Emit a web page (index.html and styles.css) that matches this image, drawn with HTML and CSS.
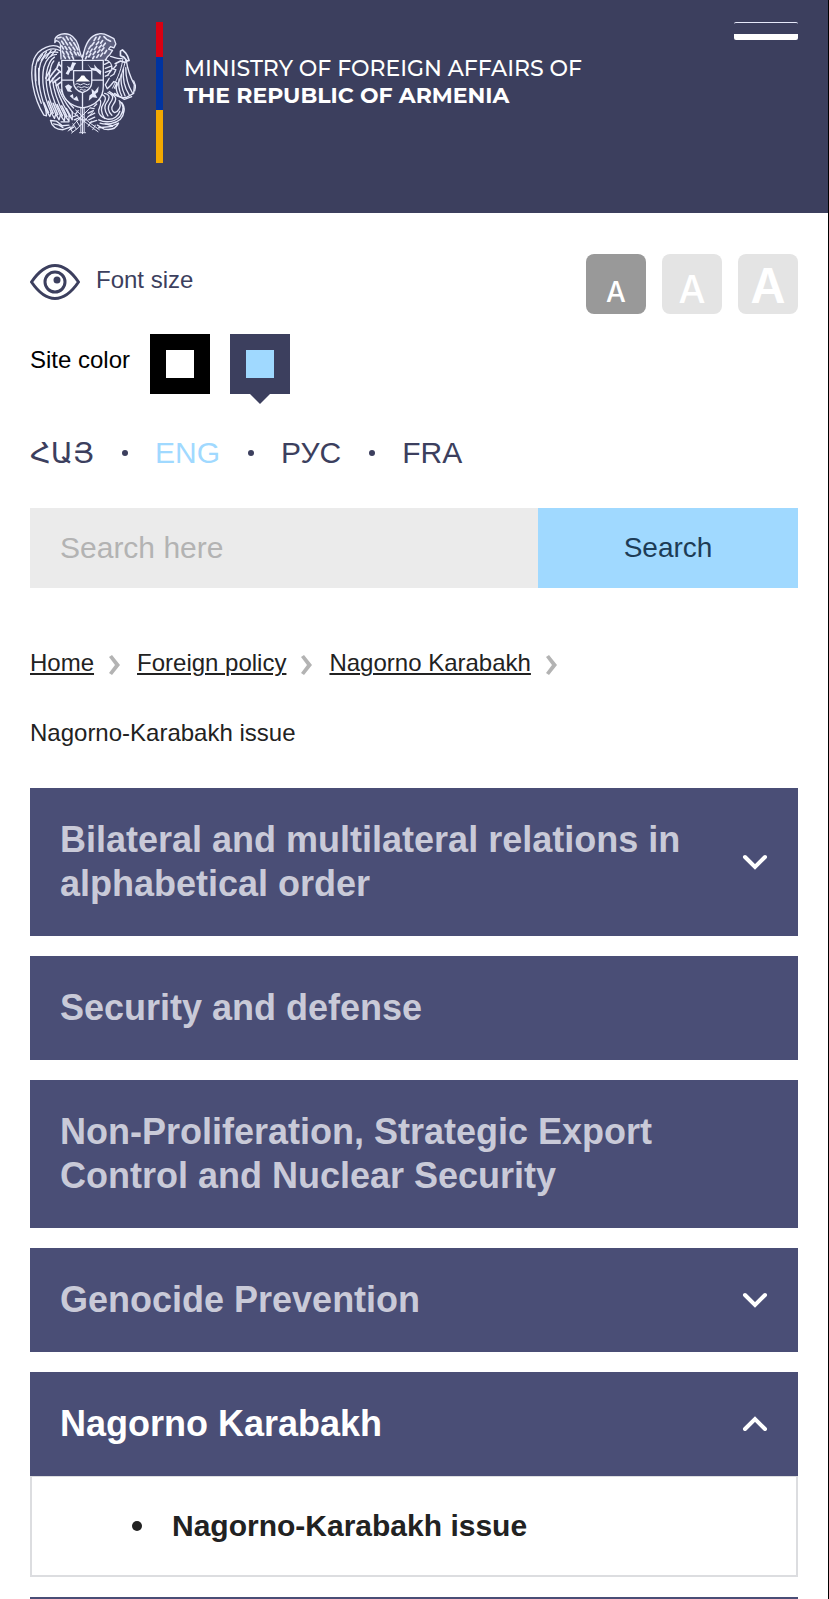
FILE: index.html
```
<!DOCTYPE html>
<html lang="en">
<head>
	<meta charset="UTF-8">
	<meta name="viewport" content="width=device-width, initial-scale=1">
	<title>Nagorno-Karabakh issue</title>
	<link rel="stylesheet" href="styles.css">
</head>
<body>
<header class="header">
	<a href="#" class="brand">
		<svg class="emblem" viewBox="28 36 321 312" fill="none" stroke="#e6e9fa" stroke-width="4" stroke-linecap="round" stroke-linejoin="round" aria-hidden="true">
			<!-- eagle -->
			<path d="M122 118L120 82C122 72 116 64 108 62L103 68L104 56C112 42 132 38 148 44C166 52 174 70 178 92L184 112" fill="#5d607f"/>
			<path d="M112 54L122 52M128 54l6 8M138 50l6 10M150 54l6 9M124 64l6 9M136 66l6 9M148 68l6 9M160 68l6 9M124 78l5 9M134 80l6 9M146 82l6 9M158 82l6 9M168 80l5 10M126 94l5 9M138 95l6 9M150 96l6 9M162 96l6 9M172 98l5 9M130 108l5 8M144 109l4 8M156 110l4 8" stroke-width="5"/>
			<!-- left wing -->
			<path d="M120 84C96 68 54 84 40 118C24 160 38 236 70 288L78 290L76 272"/>
			<path d="M118 92C94 80 64 92 50 122C38 158 44 206 62 252"/>
			<path d="M112 98C92 92 72 104 60 130C50 164 54 214 76 272L88 292L92 280"/>
			<path d="M108 104C90 104 78 118 70 142C62 180 68 226 92 280L102 298L106 284"/>
			<path d="M102 112C88 120 82 138 78 160C74 192 82 236 106 284L116 302L120 288"/>
			<path d="M100 124C90 134 88 152 86 170C86 200 96 240 120 288L132 306L134 290"/>
			<path d="M96 176C98 210 110 246 134 290L146 306L146 286M104 182C108 212 120 244 146 286L156 302L156 278"/>
			<path d="M112 196C116 216 130 244 156 278M122 210C130 232 142 248 160 266M66 104L52 124M78 96L62 122M92 92L76 116M106 90L92 108M44 140L46 184M54 146L56 196"/>
			<path d="M82 182L96 162L110 144L116 128M88 190L106 168L118 156M76 176L90 150M98 190L118 174M108 198L122 188M116 134l8 8M112 150l10 8" stroke-width="5"/>
			<path d="M70 250L84 280M84 246L98 282M98 252L112 286M110 256L126 290M124 260L140 292M138 268L150 290" stroke-width="5"/>
			<!-- lion -->
			<path d="M188 112C194 76 208 46 236 42C250 38 262 46 270 50L282 56L288 72L282 84L272 80L266 88L278 92L270 104L262 112L256 122" fill="#5d607f"/>
			<path d="M252 50l8 8M264 60l8 4M240 50l-5 9M228 52l-6 10M248 62l-6 8M236 66l-7 8M222 68l-7 9M212 78l-6 9M256 70l-7 9M244 76l-7 8M230 80l-7 9M216 88l-6 9M204 94l-5 9M252 84l-7 9M240 90l-7 8M226 95l-7 9M212 102l-6 9M248 100l-6 9M236 105l-6 8M200 110l-4 7M222 110l-4 7M260 92l-6 9" stroke-width="5"/>
			<path d="M256 120C270 124 278 136 276 150L262 168M254 134l12-6M256 146l16-6M256 158l16-6M256 170l10-4M272 110C284 112 296 120 306 116"/>
			<path d="M302 94L308 90L318 100L324 110L328 122L322 124L312 112L302 108ZM286 132L302 124L316 128" stroke-width="5"/>
			<path d="M268 176L256 196L262 208L272 198L282 186L292 190L284 206M276 146L288 150L282 164L272 170M290 136L280 148"/>
			<path d="M310 112C306 146 296 170 278 206M318 120C312 146 302 176 288 208" stroke-width="3"/>
			<!-- harp-like bow -->
			<path d="M320 124C324 154 334 176 344 196L342 222L320 234C300 238 282 226 268 216M318 144C318 172 326 200 338 220M311 148C308 178 314 204 328 226M305 164C300 188 306 208 316 230M298 178C294 198 298 214 306 230M290 192C288 206 290 218 296 228"/>
			<path d="M342 184L348 200L345 214M284 222L314 240L336 232"/>
			<!-- lion tail and ribbon -->
			<path d="M254 222C274 226 268 240 260 250C248 264 256 278 264 290M264 220C286 228 278 242 270 252C260 266 266 278 276 288M246 226C262 232 256 244 250 254C238 270 246 286 254 298"/>
			<path d="M238 240C248 246 240 262 236 272C234 284 244 296 262 300C282 302 296 290 300 276M274 224C294 232 288 246 280 256C272 266 276 276 284 280C298 276 304 262 300 250"/>
			<path d="M298 244C312 254 314 272 302 290C290 306 262 314 236 302M306 250C318 264 314 286 302 300C286 314 260 318 240 312"/>
			<path d="M232 318L252 330C274 334 290 326 296 312L278 320L256 314"/>
			<path d="M90 304L108 306L126 320L146 318M90 304C94 322 108 332 128 332L150 324M100 314L116 318L128 326M122 308L146 308M236 326L278 322"/>
			<!-- sword, wheat and broken chain -->
			<path d="M182 262V338M187 264V344M192 262V338M176 302H200M178 341H196" stroke-width="3"/>
			<path d="M166 272L210 312L238 332M208 268L166 310L144 336M158 280L220 328L234 338M218 278L174 326L154 342M148 324L156 338M158 314L168 330M168 304L178 320M226 318L218 332M214 306L204 322" stroke-width="3"/>
			<path d="M160 292l12-4M162 302l14-6M204 282l16-8M204 292l20-10M206 302l18-8M212 310l18-6M166 284l8-10M210 266l12 2M222 262l8-8M148 332l12-8"/>
			<!-- shield -->
			<path d="M124 122H250V200C250 234 228 258 187 266C146 258 124 234 124 200Z" fill="#3c3f5e"/>
			<path d="M187 106V153M187 218V266M124 182H160M215 182H250"/>
			<path d="M136 162L144 148L140 138L150 144L156 128L168 130L162 140L158 152L150 154L144 166ZM202 132L212 144L224 146L222 134L232 146L244 154L242 166L228 154L214 152ZM134 200L144 194L156 202L150 210L156 218L142 216ZM148 230L158 224L160 238L170 230L176 246L162 242ZM206 244L208 228L216 222L214 208L224 216L236 200L234 218L226 224L232 236L218 234Z" fill="#e6e9fa" stroke="none"/>
			<path d="M160 153H215V188C215 204 204 214 187 220C170 214 160 204 160 188Z" fill="#3c3f5e"/>
			<path d="M166 186L178 176L184 168H192L198 176L210 186Z" fill="#fff" stroke="none"/>
			<path d="M166 194q5-4 10 0t10 0t10 0t12 0M170 203q4-3 9 0t9 0t9 0t8 0M180 211q4-3 7 0t8 0" stroke-width="3"/>
		</svg>
		<span class="flag"></span>
		<span class="brand_name">MINISTRY OF FOREIGN AFFAIRS OF<br><b>THE REPUBLIC OF ARMENIA</b></span>
	</a>
	<button class="menu_btn" type="button" aria-label="Menu"></button>
</header>

<main class="content">
	<div class="font_size">
		<svg class="eye" viewBox="0 0 50 36" fill="none" stroke="#3c3f5e" stroke-width="3" aria-hidden="true">
			<path d="M1.5 18C9 7 16 1.5 25 1.5S41 7 48.5 18C41 29 34 34.5 25 34.5S9 29 1.5 18Z" stroke-linejoin="round"/>
			<circle cx="25" cy="18" r="10"/>
			<circle cx="27" cy="16" r="3.5" fill="#3c3f5e" stroke="none"/>
		</svg>
		<span class="caption" id="size_caption">Font size</span>
		<div class="sizes" role="group" aria-labelledby="size_caption">
			<button type="button" class="size size_small active">A</button>
			<button type="button" class="size size_medium">A</button>
			<button type="button" class="size size_big">A</button>
		</div>
	</div>

	<div class="site_color">
		<span class="caption" id="color_caption">Site color</span>
		<div class="swatches" role="group" aria-labelledby="color_caption">
			<button type="button" class="swatch" aria-label="Black and white"></button>
			<button type="button" class="swatch swatch_blue active" aria-label="Blue"></button>
		</div>
	</div>

	<ul class="langs">
		<li><a href="#" lang="hy" class="hy">ՀԱՅ</a></li>
		<li><a href="#" class="current">ENG</a></li>
		<li><a href="#" lang="ru">РУС</a></li>
		<li><a href="#" lang="fr">FRA</a></li>
	</ul>

	<form class="search" action="#">
		<input class="search_input" type="text" placeholder="Search here" aria-label="Search here">
		<button class="search_btn" type="submit">Search</button>
	</form>

	<nav class="crumbs">
		<a href="#">Home</a>
		<svg class="crumb_arrow" viewBox="0 0 13 20"><path d="M1 2L4 0L12 10L4 20L1 18L7 10Z"/></svg>
		<a href="#">Foreign policy</a>
		<svg class="crumb_arrow" viewBox="0 0 13 20"><path d="M1 2L4 0L12 10L4 20L1 18L7 10Z"/></svg>
		<a href="#">Nagorno Karabakh</a>
		<svg class="crumb_arrow" viewBox="0 0 13 20"><path d="M1 2L4 0L12 10L4 20L1 18L7 10Z"/></svg>
		<span class="crumb_last">Nagorno-Karabakh issue</span>
	</nav>

	<div class="side_menu">
		<a href="#" class="item">Bilateral and multilateral relations in alphabetical order
			<svg class="arrow" viewBox="0 0 26 16"><path d="M3 3L13 13L23 3"/></svg>
		</a>
		<a href="#" class="item">Security and defense</a>
		<a href="#" class="item">Non-Proliferation, Strategic Export Control and Nuclear Security</a>
		<a href="#" class="item">Genocide Prevention
			<svg class="arrow" viewBox="0 0 26 16"><path d="M3 3L13 13L23 3"/></svg>
		</a>
		<div class="opened">
			<a href="#" class="item active">Nagorno Karabakh
				<svg class="arrow" viewBox="0 0 26 16"><path d="M3 13L13 3L23 13"/></svg>
			</a>
			<ul class="submenu">
				<li><a href="#">Nagorno-Karabakh issue</a></li>
			</ul>
		</div>
		<a href="#" class="item" aria-label="Next section"></a>
	</div>
</main>
</body>
</html>
```
FILE: styles.css
```
*{
	box-sizing: border-box;
}
html{
	height: 100%;
}
body{
	height: 100%;
	margin: 0;
	overflow: hidden;
	border-right: 1px solid #000;
	background-color: #fff;
	font-family: "Liberation Sans", Arial, sans-serif;
	font-size: 24px;
	color: #222;
}
a{
	color: inherit;
	text-decoration: none;
}
button{
	border: 0;
	padding: 0;
	font-family: inherit;
	cursor: pointer;
}
ul{
	list-style: none;
	margin: 0;
	padding: 0;
}

/* header */
.header{
	display: flex;
	justify-content: space-between;
	align-items: flex-start;
	padding: 22px 30px 50px;
	background-color: #3c3f5e;
}
.brand{
	display: flex;
	align-items: flex-start;
	color: #fff;
}
.emblem{
	width: 106px;
	height: 103px;
	margin-top: 10px;
}
.flag{
	width: 7px;
	height: 141px;
	margin: 0 21px 0 20px;
	background: linear-gradient(#d90012 35px, #0033a0 35px, #0033a0 88px, #f2a800 88px);
}
.brand_name{
	padding-top: 33px;
	font-family: Montserrat, Inter, sans-serif;
	font-size: 22px;
	font-weight: 500;
	line-height: 27px;
}
.menu_btn{
	width: 64px;
	height: 18px;
	border-top: 1px solid #e6e9fa;
	border-bottom: 6px solid #fff;
	border-radius: 2px;
	background: none;
}

/* page settings */
.content{
	padding: 41px 30px 0;
}
.font_size,
.site_color{
	display: flex;
	align-items: center;
	margin-bottom: 20px;
}
.font_size{
	color: #3c3f5e;
}
.caption{
	padding-bottom: 8px;
}
.eye{
	width: 50px;
	height: 36px;
	margin: 0 16px 4px 0;
}
.sizes{
	display: flex;
	gap: 16px;
	margin-left: auto;
}
.size{
	display: flex;
	justify-content: center;
	align-items: flex-end;
	width: 60px;
	height: 60px;
	border-radius: 8px;
	background-color: #e4e4e4;
	color: #fff;
	font-family: Inter, sans-serif;
	font-weight: 500;
	line-height: 1;
}
.size.active{
	background-color: #999;
}
.size_small{
	padding-bottom: 8px;
	font-size: 28px;
}
.size_medium{
	padding-bottom: 6px;
	font-size: 38px;
}
.size_big{
	padding-bottom: 4px;
	font-size: 48px;
	font-weight: 600;
}
.site_color{
	gap: 20px;
	color: #000;
}
.swatches{
	display: flex;
	gap: 20px;
}
.swatch{
	position: relative;
	width: 60px;
	height: 60px;
	border: 16px solid #000;
	background-color: #fff;
}
.swatch_blue{
	border-color: #3c3f5e;
	background-color: #a0d9ff;
}
.swatch.active::after{
	content: "";
	position: absolute;
	top: 44px;
	left: 4px;
	border: 10px solid transparent;
	border-top-color: #3c3f5e;
	border-bottom: 0;
}
.langs{
	display: flex;
	margin: 41px 0 37px;
	font-size: 30px;
	line-height: 36px;
	color: #3c3f5e;
}
.langs li{
	display: flex;
	align-items: baseline;
}
.langs li + li::before{
	content: "";
	align-self: center;
	width: 6px;
	height: 6px;
	margin: 0 27px 0 28px;
	border-radius: 50%;
	background-color: #3c3f5e;
}
.langs .hy{
	font-family: "Liberation Sans", "DejaVu Sans", sans-serif;
	font-size: 29px;
}
.langs .current{
	color: #a0d9ff;
}

/* search */
.search{
	display: flex;
	margin-bottom: 40px;
}
.search_input{
	flex: 1;
	min-width: 0;
	height: 80px;
	padding: 0 30px;
	border: 0;
	border-radius: 0;
	background-color: #ebebeb;
	font-family: inherit;
	font-size: 30px;
}
.search_input::placeholder{
	color: #b3b3b3;
}
.search_btn{
	width: 260px;
	background-color: #a0d9ff;
	color: #1d3c56;
	font-size: 28px;
}

/* breadcrumbs */
.crumbs{
	display: flex;
	flex-wrap: wrap;
	align-items: center;
	margin-bottom: 20px;
	line-height: 70px;
}
.crumbs a{
	text-decoration: underline;
	text-decoration-thickness: 2px;
	text-underline-offset: 2px;
}
.crumb_arrow{
	width: 13px;
	height: 20px;
	margin: 4px 16px 0 14px;
	fill: #b3b3b3;
}
.crumb_last{
	width: 100%;
}

/* sections */
.side_menu{
	display: flex;
	flex-direction: column;
	gap: 20px;
}
.item{
	display: flex;
	justify-content: space-between;
	align-items: center;
	gap: 40px;
	min-height: 104px;
	padding: 30px;
	background-color: #4a4e76;
	color: #c9cad8;
	font-size: 36px;
	font-weight: bold;
	line-height: 44px;
}
.item.active{
	color: #fff;
}
.arrow{
	flex: none;
	width: 26px;
	height: 16px;
	fill: none;
	stroke: #fff;
	stroke-width: 4;
	stroke-linecap: round;
}
.submenu{
	padding: 31px 140px;
	border: 2px solid #dcdde0;
	border-top-width: 1px;
	font-size: 30px;
	font-weight: bold;
	line-height: 36px;
}
.submenu li{
	position: relative;
}
.submenu li::before{
	content: "";
	position: absolute;
	top: 13px;
	left: -40px;
	width: 10px;
	height: 10px;
	border-radius: 50%;
	background-color: #222;
}
```
